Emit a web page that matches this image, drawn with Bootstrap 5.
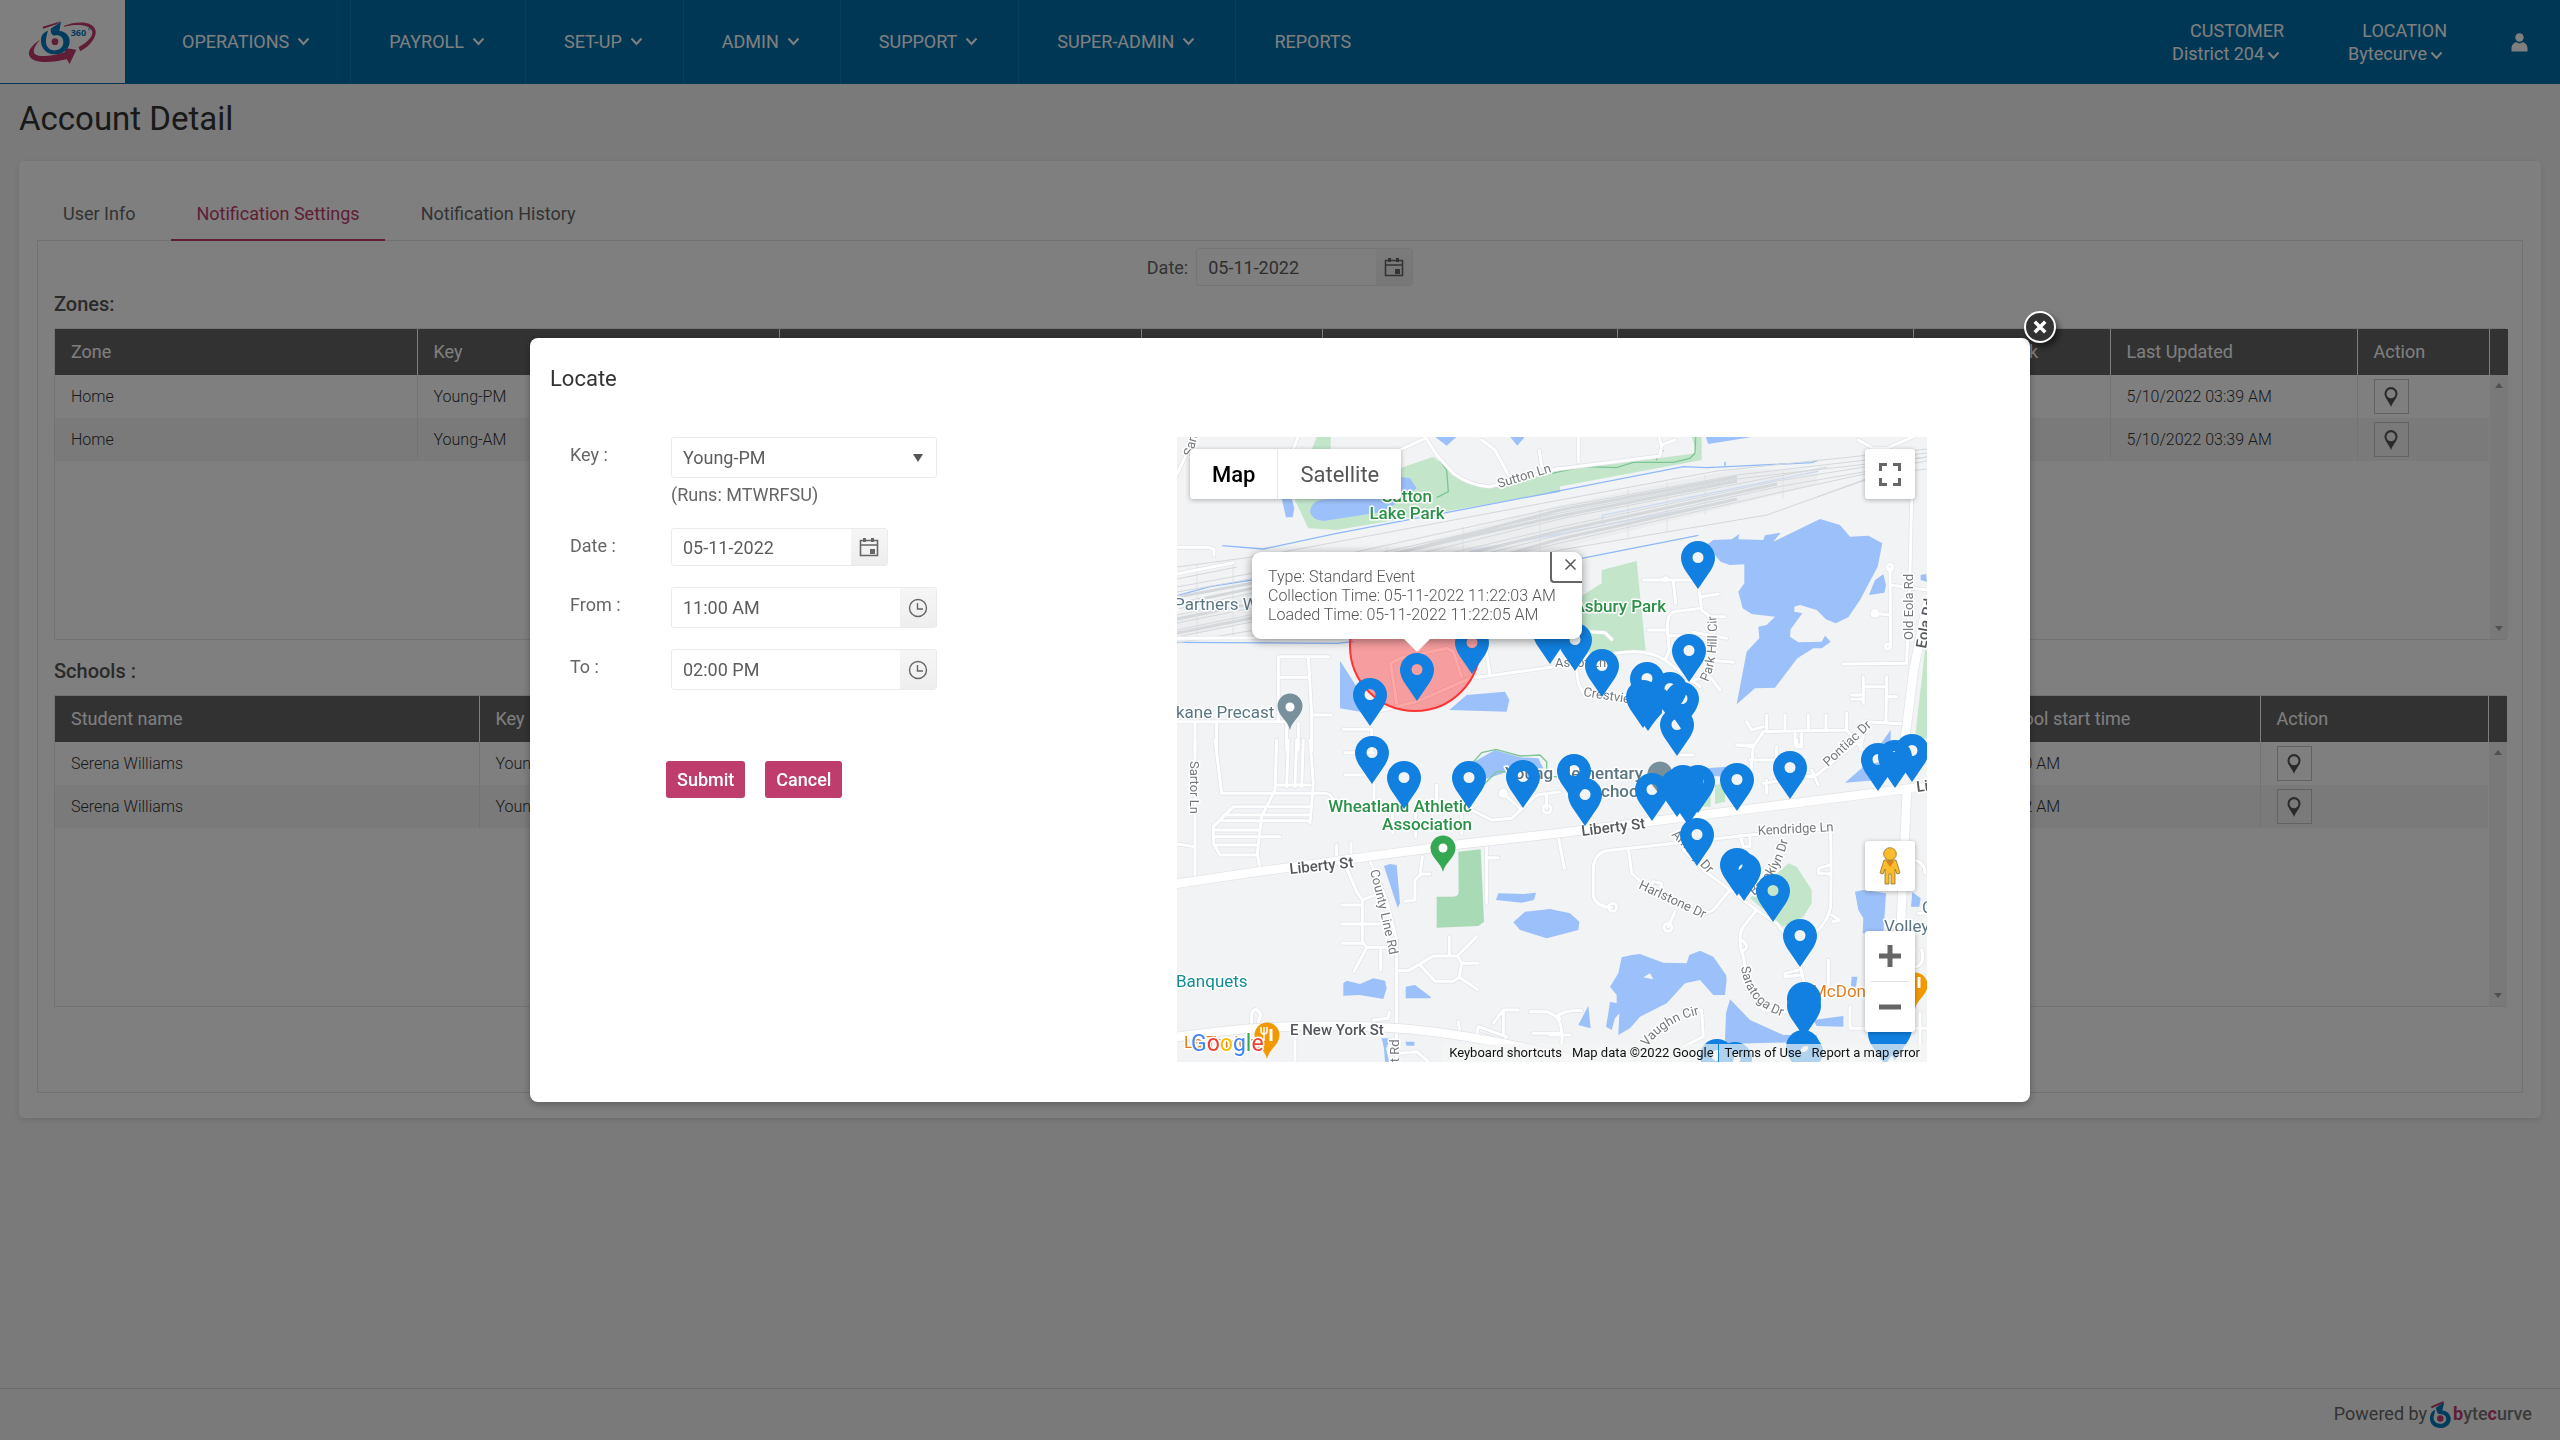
<!DOCTYPE html>
<html lang="en">
<head>
<meta charset="utf-8">
<meta name="viewport" content="width=device-width, initial-scale=1">
<title>Account Detail</title>
<link href="https://cdn.jsdelivr.net/npm/bootstrap@5.3.0/dist/css/bootstrap.min.css" rel="stylesheet">
<style>
  :root { --brand: #006eaa; --accent: #be3d6c; --line: #ebebeb; }
  body { font-family: Roboto, "Liberation Sans", sans-serif; font-size: 18px; line-height: 27px; color: #666; background: #f4f4f4; }
  a { color: inherit; text-decoration: none; }

  .topbar { background: var(--brand); color: #fff; height: 84px; }
  .brandbox { width: 125px; background: #fff; border-bottom: 1px solid var(--brand); }
  .mainnav .nav-link { color: #fff; padding: 0 40px 2px 38px; height: 84px; gap: 8px; border-right: 1px solid #1b7db3; }
  .mainnav .nav-item:first-child .nav-link { padding-left: 57px; }
  .mainnav .nav-item:last-child .nav-link { border-right: 0; }
  .picker { line-height: 23px; text-align: right; }
  .picker .chev { margin-left: 3px; }
  .chev { width: 13px; height: 9px; fill: none; stroke: currentColor; stroke-width: 2; }

  .pagetitle { font-size: 33px; line-height: 40px; font-weight: 400; color: #333; margin: 15px 19px 22px; }
  .panel { margin: 0 19px; padding: 28px 18px 25px; background: #fff; border-radius: 5px; box-shadow: 0 2px 6px rgba(0,0,0,.1); }
  .tabset { gap: 11px; padding-left: 1px; }
  .tabset .nav-link { color: #666; padding: 11px 25px 12px; height: 52px; border-bottom: 2px solid transparent; margin-bottom: -1px; }
  .tabset .nav-link.active { color: var(--accent); border-color: var(--accent); }
  .tabbody { border: 1px solid #e4e4e4; padding: 7px 16px 85px; }
  .secthead { font-size: 20px; line-height: 30px; font-weight: 500; color: #555; padding-top: 3px; margin: 0 0 9px; }

  .field { border: 1px solid var(--line); border-radius: 3px; height: 41px; background: #fff; overflow: hidden; }
  .field input, .field select { border: 0; outline: 0; background: transparent; color: #5c5c5c; padding: 0 11px; min-width: 0; width: 100%; appearance: none; font-size: 18px; }
  .field button { border: 0; width: 36px; flex: none; background: linear-gradient(#f6f6f6, #eee); color: #666; padding: 0; }
  .field button svg, .sq svg, .pinbtn svg { display: block; margin: auto; }
  .field-date { width: 217px; height: 38px; }
  .field-wide { width: 266px; }
  .caret { right: 13px; }
  .ico { fill: none; stroke: currentColor; }

  .gridbox { border: 1px solid #e6e6e6; min-height: 312px; }
  .grid { table-layout: fixed; width: 100%; align-self: flex-start; }
  .grid th { background: #656565; color: #fff; font-weight: 400; height: 46px; padding: 0 16px 2px; border-right: 1px solid #fff; white-space: nowrap; }
  .grid td { font-size: 16px; line-height: 24px; font-weight: 300; color: #333; height: 43px; padding: 0 16px; border-right: 1px solid #e6e6e6; white-space: nowrap; }
  .grid td:last-child { border-right: 0; }
  .grid tbody tr:nth-child(even) { background: #f5f5f5; }
  .pinbtn { width: 35px; height: 35px; border: 1px solid #c4c4c4; background: transparent; color: #555; padding: 0; }
  .rail { width: 18px; flex: none; background: #f3f3f3; }
  .rail-head { height: 46px; background: #656565; }
  .rail svg { fill: #a0a0a0; }
  .pagefoot { border-top: 1px solid #dcdcdc; height: 52px; padding: 0 28px 2px 0; }
  .footmark { margin: 0 2px; }
  .wordmark { font-weight: 500; color: #777; }
  .wordmark b { font-weight: 700; color: var(--accent); }

  .locate .modal-dialog { max-width: 1500px; }
  .locate .modal-content { border: 0; border-radius: 8px; box-shadow: 0 2px 8px rgba(0,0,0,.3); color: #666; }
  .locate .modal-header { border: 0; padding: 28px 20px 45px; }
  .locate .modal-title { font-size: 22px; line-height: 26px; font-weight: 400; color: #333; }
  .locate .modal-body { padding: 0 103px 40px 40px; }
  .closer { top: -27px; right: -26px; width: 32px; height: 32px; border-radius: 50%; border: 2px solid #fff; background: #333; color: #fff; padding: 0; box-shadow: 3px 4px 6px rgba(0,0,0,.5); }
  .formrow { margin-bottom: 21px; }
  .formrow > label { width: 101px; padding-top: 4px; }
  .runs { line-height: 25px; }
  .formacts { margin: 71px 0 0 96px; gap: 20px; }
  .btn-accent { --bs-btn-bg: var(--accent); --bs-btn-color: #fff; --bs-btn-hover-bg: #a83460; --bs-btn-hover-color: #fff; border: 0; border-radius: 3px; font-size: 18px; font-weight: 500; line-height: 27px; padding: 5px 11px; }

  .mapbox { flex: 0 0 750px; max-width: 750px; overflow: hidden; background: #f1f3f4; }
  .mapsvg { display: block; width: 100%; height: auto; font-family: Roboto, sans-serif; }
  .mapctl { background: #fff; border: 0; border-radius: 3px; box-shadow: 0 1px 5px rgba(0,0,0,.3); color: #666; }
  .sq { width: 50px; height: 50px; padding: 0; }
  .maptype { top: 12px; left: 13px; height: 50px; font-size: 22px; }
  .maptype button { border: 0; background: none; padding: 0 22px; color: #565656; }
  .maptype button:first-child { color: #000; font-weight: 500; border-right: 1px solid #e6e6e6; }
  .ctl-full { top: 12px; right: 12px; }
  .ctl-peg { bottom: 171px; right: 12px; }
  .ctl-zoom { bottom: 30px; right: 12px; }
  .ctl-zoom button { border: 0; background: none; color: #666; }
  .ctl-zoom hr { margin: 0 6px; opacity: 1; border-color: #e0e0e0; }
  .infowin { left: 75px; top: 115px; width: 330px; height: 87px; background: #fff; border-radius: 9px; padding: 15px 16px; font-size: 16px; line-height: 19px; font-weight: 300; color: #555; box-shadow: 0 2px 8px 1px rgba(0,0,0,.35); white-space: nowrap; }
  .infowin::after { content: ""; position: absolute; left: 151px; top: 86px; border: 14px solid transparent; border-bottom: 0; border-top-color: #fff; }
  .infoclose { top: 0; right: 0; width: 32px; height: 31px; border: 2px solid #666; border-top: 0; border-right: 0; border-bottom-left-radius: 4px; border-top-right-radius: 9px; background: #fff; padding: 0 0 5px 6px; color: #666; }
  .credits { right: 0; bottom: 0; height: 18px; padding: 0 7px; gap: 10px; font-size: 13px; line-height: 18px; color: #111; background: rgba(245,245,245,.7); }
  .credits .terms { border-left: 1px solid #1180e0; padding-left: 6px; margin-left: -6px; }

  .casing { stroke: #e0e2e6; fill: none; stroke-linejoin: round; stroke-linecap: round; }
  .surface { stroke: #fff; fill: none; stroke-linejoin: round; stroke-linecap: round; }
  .w13 { stroke-width: 13px; } .w9 { stroke-width: 9px; }
  .w30 { stroke-width: 30px; } .w26 { stroke-width: 26px; }
  .water { fill: #9cc0f9; } .park { fill: #c3e6cb; }
  .stream { fill: none; stroke: #8fb8fb; stroke-width: 4px; }
  .trail { fill: none; stroke: #7cc594; stroke-width: 4px; }
  .tracks { fill: none; stroke: #d5d8db; stroke-width: 1px; }
  .lbl text { paint-order: stroke; stroke: #fff; stroke-width: 3px; stroke-linejoin: round; }
  .poi { font-size: 17px; fill: #5b7683; }
  .street { font-size: 13px; fill: #75787c; }
  .major { font-size: 15px; font-weight: 500; fill: #54585c; }
  .green { fill: #2b9148; font-weight: 500; } .teal { fill: #128c96; } .orange { fill: #e37d1e; }
</style>
</head>
<body>
<svg width="0" height="0" class="position-absolute" aria-hidden="true">
  <defs>
    <symbol id="chev" viewBox="0 0 13 9"><path d="M1.5 1.5 6.5 7l5-5.5"/></symbol>
    <symbol id="cal" viewBox="0 0 20 20"><path d="M1.5 3.500h17v15h-17zM1.500 8h17" stroke-width="1.600"/><path d="M5.500 1v4M13.500 1v4" stroke-width="3"/><path d="M11 12h5v5h-5z" fill="currentColor" stroke="none"/></symbol>
    <symbol id="clock" viewBox="0 0 20 20"><circle cx="10" cy="10" r="8.500" stroke-width="1.400"/><path d="M9.500 5v6h5.500" stroke-width="1.400"/></symbol>
    <symbol id="place" viewBox="0 0 16 22"><path fill="currentColor" fill-rule="evenodd" d="M8 21C6.500 16 1.500 12 1.500 7.500a6.500 6.500 0 0 1 13 0C14.500 12 9.500 16 8 21zM8 3.200a4.500 4.500 0 1 0 0 9 4.500 4.500 0 0 0 0-9z"/></symbol>
    <symbol id="bmark" viewBox="0 0 66 86"><path fill="#c23b6b" d="M4 20 46 2 38 12 8 25z"/><path fill="#0079bd" d="M20 24 46 6 40 32C54 32 66 44 66 58 66 74 52 86 34 86 16 86 2 74 2 56 2 44 8 34 18 30L16 42C14 50 12 52 14 60 17 69 24 73 34 73 44 73 52 67 52 58 52 49 44 44 36 44 26 44 24 40 20 24z"/><circle cx="34" cy="57" r="10" fill="#c23b6b"/></symbol>
  </defs>
</svg>

<div class="d-flex flex-column min-vh-100">
  <header class="topbar d-flex">
    <a class="brandbox d-flex align-items-center" href="#" aria-label="b360 home">
      <svg width="125" height="83" viewBox="0 0 375 249">
        <path fill="#c23b6b" d="M128 80 183 64 170 73 130 86zM192 77C230 62 280 62 287 92 290 112 270 138 240 154L236 141C262 128 278 110 277 96 274 74 232 70 192 80z"/>
        <path fill="#c23b6b" d="M122 118C98 134 82 152 88 167 96 190 152 190 200 178L209 192 229 149 190 143 196 156C150 172 108 172 102 158 99 147 110 130 122 118z"/>
        <path fill="#0079bd" d="M152 86 183 65 178 93C197 94 209 108 209 124 209 146 192 163 166 163 140 163 123 146 123 122 123 108 128 98 144 92 138 112 136 124 140 136 145 148 156 152 166 151 181 150 190 140 190 126 190 112 180 105 168 106 158 107 152 104 152 86z"/>
        <circle cx="165" cy="125" r="10" fill="#c23b6b"/>
        <text x="212" y="107" font-family="Open Sans, sans-serif" font-weight="700" font-size="27" fill="#0079bd">360</text><circle cx="268" cy="87" r="3" fill="none" stroke="#0079bd" stroke-width="1.500"/>
      </svg>
    </a>
    <ul class="mainnav nav flex-nowrap">
      <li class="nav-item"><a class="nav-link d-flex align-items-center" href="#">OPERATIONS <svg class="chev"><use href="#chev"/></svg></a></li>
      <li class="nav-item"><a class="nav-link d-flex align-items-center" href="#">PAYROLL <svg class="chev"><use href="#chev"/></svg></a></li>
      <li class="nav-item"><a class="nav-link d-flex align-items-center" href="#">SET-UP <svg class="chev"><use href="#chev"/></svg></a></li>
      <li class="nav-item"><a class="nav-link d-flex align-items-center" href="#">ADMIN <svg class="chev"><use href="#chev"/></svg></a></li>
      <li class="nav-item"><a class="nav-link d-flex align-items-center" href="#">SUPPORT <svg class="chev"><use href="#chev"/></svg></a></li>
      <li class="nav-item"><a class="nav-link d-flex align-items-center" href="#">SUPER-ADMIN <svg class="chev"><use href="#chev"/></svg></a></li>
      <li class="nav-item"><a class="nav-link d-flex align-items-center" href="#">REPORTS</a></li>
    </ul>
    <div class="d-flex align-items-center ms-auto pe-4 me-2">
      <a class="picker me-5 pe-3" href="#">CUSTOMER<br><span class="pe-1">District 204<svg class="chev"><use href="#chev"/></svg></span></a>
      <a class="picker me-5 pe-3" href="#">LOCATION<br><span class="pe-1">Bytecurve<svg class="chev"><use href="#chev"/></svg></span></a>
      <a href="#" aria-label="Profile"><svg class="d-block" width="17" height="19" viewBox="0 0 17 19" fill="#fff"><circle cx="8.500" cy="4.500" r="4.200"/><path d="M.5 18.500v-3C.5 11 4 9.300 5.500 9.300c2 1.500 4 1.500 6 0 1.500 0 5 1.700 5 6.200v3z"/></svg></a>
    </div>
  </header>

  <main class="flex-grow-1">
    <h1 class="pagetitle">Account Detail</h1>
    <section class="panel">
      <ul class="tabset nav">
        <li class="nav-item"><a class="nav-link" href="#">User Info</a></li>
        <li class="nav-item"><a class="nav-link active" aria-current="page" href="#">Notification Settings</a></li>
        <li class="nav-item"><a class="nav-link" href="#">Notification History</a></li>
      </ul>
      <div class="tabbody">
        <div class="d-flex justify-content-center align-items-center gap-2">
          <label for="pageDate">Date:</label>
          <div class="field field-date d-flex"><input id="pageDate" type="text" value="05-11-2022"><button type="button" aria-label="Pick date"><svg class="ico" width="20" height="20"><use href="#cal"/></svg></button></div>
        </div>
        <h2 class="secthead">Zones:</h2>
        <div class="gridbox d-flex mb-2">
          <table class="grid">
            <colgroup><col width="362"><col width="362"><col width="362"><col width="181"><col width="295"><col width="296"><col width="197"><col width="247"><col width="132"></colgroup>
            <thead><tr><th>Zone</th><th>Key</th><th></th><th></th><th></th><th></th><th>Days of Week</th><th>Last Updated</th><th>Action</th></tr></thead>
            <tbody>
              <tr><td>Home</td><td>Young-PM</td><td></td><td></td><td></td><td></td><td></td><td>5/10/2022 03:39 AM</td><td><button class="pinbtn d-block" aria-label="Locate"><svg width="16" height="22"><use href="#place"/></svg></button></td></tr>
              <tr><td>Home</td><td>Young-AM</td><td></td><td></td><td></td><td></td><td></td><td>5/10/2022 03:39 AM</td><td><button class="pinbtn d-block" aria-label="Locate"><svg width="16" height="22"><use href="#place"/></svg></button></td></tr>
            </tbody>
          </table>
          <div class="rail d-flex flex-column align-items-center"><div class="rail-head w-100"></div><svg class="mt-2" width="8" height="5"><path d="M0 5 4 0l4 5z"/></svg><svg class="mt-auto mb-2" width="8" height="5"><path d="M0 0h8L4 5z"/></svg></div>
        </div>
        <h2 class="secthead pt-2 mt-1">Schools :</h2>
        <div class="gridbox d-flex">
          <table class="grid">
            <colgroup><col width="424"><col width="424"><col width="537"><col width="537"><col width="283"><col width="228"></colgroup>
            <thead><tr><th>Student name</th><th>Key</th><th></th><th></th><th>School start time</th><th>Action</th></tr></thead>
            <tbody>
              <tr><td>Serena Williams</td><td>Young-PM</td><td></td><td></td><td>08:00 AM</td><td><button class="pinbtn d-block" aria-label="Locate"><svg width="16" height="22"><use href="#place"/></svg></button></td></tr>
              <tr><td>Serena Williams</td><td>Young-AM</td><td></td><td></td><td>08:12 AM</td><td><button class="pinbtn d-block" aria-label="Locate"><svg width="16" height="22"><use href="#place"/></svg></button></td></tr>
            </tbody>
          </table>
          <div class="rail d-flex flex-column align-items-center"><div class="rail-head w-100"></div><svg class="mt-2" width="8" height="5"><path d="M0 5 4 0l4 5z"/></svg><svg class="mt-auto mb-2" width="8" height="5"><path d="M0 0h8L4 5z"/></svg></div>
        </div>
      </div>
    </section>
  </main>

  <footer class="pagefoot d-flex justify-content-end align-items-center">
    <span>Powered by</span>
    <svg class="footmark" width="22" height="28"><use href="#bmark"/></svg>
    <span class="wordmark"><b>b</b>yte<b>c</b>urve</span>
  </footer>
</div>

<div class="modal-backdrop show"></div>
<div class="modal locate d-block" role="dialog" aria-labelledby="locateTitle">
  <div class="modal-dialog modal-dialog-centered">
    <div class="modal-content">
      <button class="closer position-absolute d-flex align-items-center justify-content-center" type="button" aria-label="Close"><svg width="14" height="14" viewBox="0 0 12 12" stroke="#fff" stroke-width="3"><path d="M1.500 1.500l9 9M10.500 1.500l-9 9"/></svg></button>
      <div class="modal-header"><h2 class="modal-title" id="locateTitle">Locate</h2></div>
      <div class="modal-body d-flex justify-content-between">
        <form>
          <div class="formrow d-flex">
            <label for="fKey">Key :</label>
            <div>
              <div class="field field-wide d-flex align-items-center position-relative">
                <select id="fKey" class="h-100"><option>Young-PM</option><option>Young-AM</option></select>
                <svg class="caret position-absolute pe-none" width="10" height="8" fill="#555"><path d="M0 0h10L5 8z"/></svg>
              </div>
              <div class="runs pt-1">(Runs: MTWRFSU)</div>
            </div>
          </div>
          <div class="formrow d-flex">
            <label for="fDate">Date :</label>
            <div class="field field-date d-flex"><input id="fDate" type="text" value="05-11-2022"><button type="button" aria-label="Pick date"><svg class="ico" width="20" height="20"><use href="#cal"/></svg></button></div>
          </div>
          <div class="formrow d-flex">
            <label for="fFrom">From :</label>
            <div class="field field-wide d-flex"><input id="fFrom" type="text" value="11:00 AM"><button type="button" aria-label="Pick time"><svg class="ico" width="20" height="20"><use href="#clock"/></svg></button></div>
          </div>
          <div class="formrow d-flex mb-0">
            <label for="fTo">To :</label>
            <div class="field field-wide d-flex"><input id="fTo" type="text" value="02:00 PM"><button type="button" aria-label="Pick time"><svg class="ico" width="20" height="20"><use href="#clock"/></svg></button></div>
          </div>
          <div class="formacts d-flex"><button type="submit" class="btn btn-accent">Submit</button><button type="button" class="btn btn-accent">Cancel</button></div>
        </form>

        <div class="mapbox position-relative">
          <svg class="mapsvg" viewBox="0 0 750 625" role="img" aria-label="Map of stops">
            <defs>
              <path id="pin" fill="#1180e0" fill-rule="evenodd" d="M0 0-13-19Q-17-26-17-31A17 17 0 0 1 17-31Q17-26 13-19ZM0-37a5.500 5.500 0 1 0 0 11 5.500 5.500 0 0 0 0-11z"/>
              <g id="poipin"><path d="M0 0C-2-10-12.500-14-12.500-24a12.500 12.500 0 0 1 25 0C12.500-14 2-10 0 0z"/></g>
              <!-- map tiles: nw, ne, sw, se, each at three units to the pixel -->
              <g id="nwRoads"><path d="M20 352H115L132 357V376M20 432 190 398M0 175 75 20M370 57 385 20M690 60 765 25M765 20 800 75 850 130Q900 167 960 170L1170 115M935 30 975 60 1015 135M1108 62 1115 110M325 870V680H475M325 742H415M415 680 425 855H485M20 875H350M75 875V960M140 880V960M350 880V960M385 880V960M425 860V960M680 820 662 700 690 685 830 655 850 665 875 740M600 850 740 815 900 745 1170 708M945 640 960 735M520 898H605V960M0 625 550 622"/></g>
              <g id="neRoads"><path d="M85 20V95M0 120 330 78 335 45 375 30M335 50 328 25M925 30 970 55H1010L1090 20M1085 205 1080 430 1070 700 880 702M1020 415 1022 650M970 550 1020 555M1020 465 1131 480M280 450H440M445 460 455 540 480 560H525M370 455 377 520M455 500 505 492M455 535 370 545Q350 555 352 600L358 660 345 690M295 600H355M355 617H410M430 607 530 625M480 690 550 697M120 605 165 608 185 628M60 700 200 670Q290 655 345 690L450 770M400 755 480 740 510 780M77 700 85 760 100 790 200 810M940 740V820M1010 740 1008 875M905 795H940M905 808H940M940 770H1010M1008 800H1040M1060 882 950 875 930 960M650 855V900M705 855V895M775 855V895M828 855V895M890 850V900M560 945 610 950 640 905 890 900 940 960M590 875 605 900 640 890M735 905V945H755V905"/><circle cx="1020" cy="412" r="9"/><circle cx="975" cy="550" r="9"/><circle cx="1013" cy="650" r="7"/><circle cx="347" cy="448" r="5"/></g>
              <g id="swRoads"><path d="M75 0V415M135 0 155 160H470Q490 165 495 200M320 0 315 150 275 230 262 340 270 390M190 200H420M160 225H420M145 242H420M130 270H265M130 290H330M135 315H260M190 200 130 260V310L150 345H262M420 0 430 130 420 250M355 0 350 140M380 0 375 140M400 0 395 140M315 135H420M20 312 75 320M525 38H610M525 105H610M612 60V190M500 315V370M543 310V350M800 135V220M668 200V280M737 210V290M875 215V280M530 385 560 455 577 480V605L590 622H680M515 495H577M515 552H637M517 610H577M577 480 640 455M590 622 552 695M632 630V690M685 692H715L790 648H862L875 670 868 712 850 724H795L750 675M838 590V645M920 590 862 648M925 670H878M868 712 922 748M757 350 750 405 735 420V480L705 484M750 402H780M950 320V490M950 353H985M905 210 965 240 1025 235 1100 165 1170 155M1000 160 1050 205M1130 165V205M245 860V820Q258 795 272 825L265 845M375 885V965M610 840 655 835 658 815M690 940 740 935 775 965M865 845 870 880M925 860 1010 890 1000 905 920 880zM970 850 1000 810H1045M1000 810V880M1080 815H1130L1170 835M1090 880H1170"/><circle cx="1000" cy="160" r="9"/><circle cx="1131" cy="207" r="12"/><path d="M600 365 650 480 680 600V965"/></g>
              <g id="seRoads"><path d="M25 290 43 385M185 502Q140 500 130 470V380Q135 340 170 332L600 285 840 265Q845 300 842 500 835 540 800 575M235 325 245 400 290 440M300 440 310 425 335 430 330 455M460 525 490 510 540 450M375 515 355 560M400 330 460 390 540 450 620 510 680 550 740 630 765 740M620 510 580 560Q560 590 580 650L600 760 640 810 710 815M575 600Q605 622 575 635M570 285 580 320H600V285M745 690 705 700V710L755 705M835 660V740M845 525 870 540 848 545M840 375 805 385V400L840 402M1105 520H1131M1090 360Q1125 365 1125 400M1115 630Q1125 670 1100 680M900 800V865H1131M1000 865V960M1060 865V960M1110 820V960M380 45H430M565 15H610L600 130M600 60H680V20M650 120V160M640 130 800 105M740 0V20H755V0M930 0 800 105M785 90 805 135M20 830Q40 810 95 812M20 830Q40 860 35 910M0 885H60M400 810H455L460 890 400 920"/><circle cx="188" cy="502" r="12"/><circle cx="354" cy="562" r="12"/></g>
              <path id="cParkHill" d="M531 245Q544 218 538 165"/>
              <path id="cCounty" d="M193 434Q204 475 217 540"/>
              <path id="cBrook" d="M577 459Q606 435 613 395"/>
              <path id="cSara" d="M564 530Q570 573 615 582"/>
              <path id="cVaughn" d="M470 610Q490 582 530 576"/>
            </defs>
            <rect width="750" height="625" fill="#f1f3f4"/>

            <g transform="translate(-7 -7) scale(.33333)">
              <path class="park" d="M690 115 790 80 850 130 940 175 1170 125V185L820 245 500 300 415 295 370 200 690 190zM440 20H482V60H425z"/>
              <path class="water" d="M420 245Q425 205 480 208L640 200 690 140 720 145 740 175 700 205 640 245 460 273Q425 270 420 245zM335 205H365L373 235 368 262H348zM795 20H860L830 47zM1020 20H1065L1042 47zM510 692 560 770 570 845 510 835zM838 840 890 795 1005 785 1018 810 1010 845z"/>
              <path class="trail" d="M790 65 830 120 835 185 800 203"/>
              <path class="stream" d="M157 347 280 357 500 310 1170 183M20 497 120 470 245 450M20 637 500 640 550 635M900 362 1170 312"/>
            </g>
            <g transform="translate(373 -7) scale(.33333)">
              <path class="park" d="M0 125 440 70 425 20H455V90L0 175zM155 420 260 393 287 662 120 672 60 520 155 460zM1125 660H1131V925H1095zM1055 890 1070 870V930H1055z"/>
              <path class="water" d="M470 345 490 330 545 328 568 312 565 328 640 330 645 316 692 308 670 335 810 267 870 285 900 320 955 317 997 340 983 410 930 510 895 562 857 580 828 568 800 540 750 525 733 530V545L757 550 722 598 720 620 745 637 815 635 825 617 842 635 815 655 790 655 742 685 675 773 615 775 560 823 590 665 628 625 625 590 650 585 675 560 605 552 578 535 565 485 583 460V403L540 405 512 395zM467 20H612L475 42zM957 495 975 450 1000 433 1008 465 1003 488zM1112 435 1128 432 1131 455 1112 450zM990 945 1022 900V945z"/>
              <path class="stream" d="M0 188 400 110 470 113 785 98 803 91M525 108V95M160 285 157 256 803 124M0 317 493 222M95 385 445 316"/>
              <path class="trail" d="M5 130 100 110 200 113 250 97 370 97 420 85 435 70 437 20M318 90 340 60"/>
            </g>
            <!-- rail yard -->
            <path d="M0 180 120 140 383 68 560 32 640 33 640 48 383 111 180 165 0 200z" fill="#e8eaec" opacity=".7"/>
            <g class="tracks">
              <path d="M0 130 90 118 383 63 540 34 750 12M0 150 120 128 383 70 560 38 750 16M0 155 130 132 383 76 560 42 750 20M0 172 140 142 383 82 560 47 650 30M0 178 140 148 383 90 600 44 750 20M0 186 160 154 383 98 600 50 750 24M0 193 180 156 383 106 600 56 720 30M0 200 180 164 383 113 590 78 640 60 720 32M0 206 120 186 180 172M0 142 60 130M640 60 700 38 750 32"/>
              <path d="M0 160 130 136 383 79 560 44M0 182 150 151 383 94 600 47M0 196 180 160 383 102 560 62M0 167 135 139 383 73 560 40" stroke-width="3"/>
              <path d="M20 128V205M56 124V200M92 120V195M130 128V182M210 110V160M286 90V140M363 72V120M451 52V100M490 45V95M528 38V78M606 34V62" opacity=".6"/>
            </g>
            <g transform="translate(-7 303) scale(.33333)">
              <path class="park" d="M865 335 932 328 942 545 925 558 800 563V470H850Q866 468 866 455z" style="fill:#a8dab5"/>
              <path class="water" d="M905 70 975 30 1050 52 1105 55 1120 85 1020 92 940 120zM642 378 660 372 680 375 690 490 683 503zM978 480 985 460 1060 462 1098 458 1092 480 1055 488zM1030 547 1065 515 1140 507 1200 520 1228 545 1225 570 1130 595 1050 570zM520 730 530 722 570 732 610 715 645 722 650 745 640 777 570 765 520 767zM707 740 735 735 782 770V775H707zM635 895H655V910L648 925 657 965H645L642 925zM706 905H733V917H710zM1085 920H1110V935H1085z"/>
              <path class="trail" d="M905 72 935 38 978 28 1050 48 1110 45 1130 65V90M1170 110H1110M1020 95H980L940 135"/>
            </g>
            <g transform="translate(373 303) scale(.33333)">
              <path class="park" d="M600 475 660 420 715 370 740 380 785 450 785 490 760 530 700 560zM450 160H482V200H450zM495 135 525 130V185L495 192z"/>
              <path class="water" d="M180 740 205 700 215 652 245 645 270 642 340 668 410 670 418 645 450 632 490 650 528 705 530 720 525 765H490L450 720 405 730 350 790 270 830 240 865 205 885 208 820 195 835 185 870 168 860 175 820 180 785 200 790 200 765zM525 905 528 820 540 778 600 840 700 885 800 885 800 905 525 912zM885 128 940 80 1010 60V118zM0 508 50 525 60 560 0 585zM85 855 115 797 122 865zM470 85 530 80V110L490 108zM915 455 940 450 1008 460 1000 580H938L940 535 925 510zM1087 457 1112 475 1108 500 1083 500zM905 710H922L918 740H903zM790 840 880 828V860L800 858z"/>
              <path fill="#f1f3f4" d="M280 712 300 700 310 718z"/>
            </g>
            <!-- roads: casing first, then surface -->
            <g class="casing w13">
              <use href="#nwRoads" transform="translate(-7 -7) scale(.33333)"/><use href="#neRoads" transform="translate(373 -7) scale(.33333)"/><use href="#swRoads" transform="translate(-7 303) scale(.33333)"/><use href="#seRoads" transform="translate(373 303) scale(.33333)"/>
            </g>
            <g class="surface w9">
              <use href="#nwRoads" transform="translate(-7 -7) scale(.33333)"/><use href="#neRoads" transform="translate(373 -7) scale(.33333)"/><use href="#swRoads" transform="translate(-7 303) scale(.33333)"/><use href="#seRoads" transform="translate(373 303) scale(.33333)"/>
            </g>
            <g transform="scale(.33333)">
              <g class="casing w30"><path d="M0 1340 250 1303 580 1258 850 1222 1150 1188 2250 1048M0 1800Q300 1755 600 1770 850 1780 1200 1870M2190 1055 2170 1500M2172 1000 2210 700 2250 500"/></g>
              <g class="surface w26"><path d="M0 1340 250 1303 580 1258 850 1222 1150 1188 2250 1048M0 1800Q300 1755 600 1770 850 1780 1200 1870M2190 1055 2170 1500M2172 1000 2210 700 2250 500"/></g>
            </g>

            <g class="lbl">
              <text class="street" transform="translate(15 20) rotate(-75)">San</text>
              <g class="poi green" text-anchor="middle"><text x="230" y="65">Sutton</text><text x="230" y="82">Lake Park</text></g>
              <text class="street" transform="translate(322 51) rotate(-17)">Sutton Ln</text>
              <text class="poi" x="-3" y="173">Partners W</text>
              <text class="poi" x="-1" y="281">kane Precast</text>
              <text class="poi green" x="489" y="175" text-anchor="end">Asbury Park</text>
              <text class="street"><textPath href="#cParkHill">Park Hill Cir</textPath></text>
              <text class="street" transform="translate(736 203) rotate(-90)">Old Eola Rd</text>
              <text class="major" transform="translate(749 212) rotate(-80)">Eola Rd</text>
              <text class="street" x="378" y="230">Ascot Ln</text>
              <text class="street" transform="translate(406 259) rotate(9)">Crestview Dr</text>
              <text class="street" transform="translate(651 330) rotate(-43)">Pontiac Dr</text>
              <text class="street" transform="translate(13 324) rotate(90)">Sartor Ln</text>
              <text class="major" transform="translate(113 437) rotate(-6)">Liberty St</text>
              <text class="major" transform="translate(405 399) rotate(-7)">Liberty St</text>
              <text class="major" transform="translate(740 355) rotate(-7)">Li</text>
              <text class="street"><textPath href="#cCounty">County Line Rd</textPath></text>
              <text class="poi green" x="295" y="375" text-anchor="end">Wheatland Athletic</text>
              <text class="poi green" x="295" y="393" text-anchor="end">Association</text>
              <text class="poi" x="466" y="342" text-anchor="end" font-weight="500">Young Elementary</text>
              <text class="poi" x="466" y="360" text-anchor="end" font-weight="500">School</text>
              <text class="street" transform="translate(581 398) rotate(-3)">Kendridge Ln</text>
              <text class="street"><textPath href="#cBrook">Brooklyn Dr</textPath></text>
              <text class="street" transform="translate(494 398) rotate(46)">Amory Dr</text>
              <text class="street" transform="translate(461 451) rotate(25)">Harlstone Dr</text>
              <text class="street"><textPath href="#cSara">Saratoga Dr</textPath></text>
              <text class="street"><textPath href="#cVaughn">Vaughn Cir</textPath></text>
              <text class="poi" x="745" y="476">C</text>
              <text class="poi" x="707" y="495">Volley</text>
              <text class="poi orange" x="635" y="560">McDona</text>
              <text class="poi teal" x="-1" y="550">Banquets</text>
              <text class="major" x="113" y="598">E New York St</text>
              <text class="poi orange" x="7" y="611">La Tapiers</text>
              <text class="street" transform="translate(222 633) rotate(-90)">St Rd</text>
            </g>
            <g fill="#78909c"><use href="#poipin" x="113" y="293"/><use href="#poipin" x="483" y="361"/></g>
            <use href="#poipin" x="266" y="435" fill="#34a853"/>
            <g fill="#f29900"><use href="#poipin" x="90" y="622"/><use href="#poipin" x="738" y="572"/></g>
            <g fill="#fff"><circle cx="113" cy="270" r="4.500"/><circle cx="266" cy="411" r="4.500"/></g>
            <g fill="none" stroke="#fff"><path d="M84 590v4q0 3 3 3t3-3v-4M87 590v14" stroke-width="1.500"/><path d="M94 604v-12" stroke-width="3"/><path d="M742 540v11" stroke-width="3"/></g>
            <circle cx="238" cy="209" r="65" fill="#ff0000" fill-opacity=".35" stroke="#f33" stroke-width="2"/>
            <g>
              <use href="#pin" x="521" y="152"/><use href="#pin" x="240" y="264"/><use href="#pin" x="295" y="237"/><use href="#pin" x="373" y="227"/><use href="#pin" x="398" y="234"/><use href="#pin" x="425" y="260"/><use href="#pin" x="512" y="245"/><use href="#pin" x="193" y="289"/><use href="#pin" x="195" y="347"/>
              <use href="#pin" x="470" y="273"/><use href="#pin" x="493" y="283"/><use href="#pin" x="466" y="291"/><use href="#pin" x="471" y="294"/><use href="#pin" x="505" y="293"/><use href="#pin" x="500" y="319"/>
              <path fill="#1180e0" d="M455 253l20-5 8 10 2 18-14 16-12-14zM488 252l5 6 2 22-10-8z"/>
              <use href="#pin" x="227" y="372"/><use href="#pin" x="292" y="372"/><use href="#pin" x="346" y="371"/><use href="#pin" x="397" y="365"/><use href="#pin" x="408" y="389"/><use href="#pin" x="475" y="384"/>
              <use href="#pin" x="500" y="380"/><use href="#pin" x="506" y="376"/><use href="#pin" x="511" y="388"/><use href="#pin" x="521" y="376"/><path fill="#1180e0" d="M494 337h32v28l-14 16-20-22z"/>
              <use href="#pin" x="560" y="374"/><use href="#pin" x="613" y="362"/><use href="#pin" x="701" y="354"/><use href="#pin" x="718" y="351"/><use href="#pin" x="735" y="345"/><path fill="#1180e0" d="M704 315h22l-4 22-6 6-12-10z"/>
              <use href="#pin" x="520" y="429"/><use href="#pin" x="560" y="459"/><use href="#pin" x="567" y="464"/><use href="#pin" x="596" y="485"/><use href="#pin" x="623" y="530"/>
              <use href="#pin" x="627" y="593"/><use href="#pin" x="627" y="600"/><path fill="#1180e0" d="M617 552h20v26h-20z"/><use href="#pin" x="626" y="641"/><use href="#pin" x="629" y="646"/><use href="#pin" x="540" y="650"/><use href="#pin" x="558" y="653"/><use href="#pin" x="708" y="628"/><use href="#pin" x="718" y="623"/>
            </g>
            <g class="lbl" font-size="23"><text x="14" y="614"><tspan fill="#4285f4">G</tspan><tspan fill="#ea4335">o</tspan><tspan fill="#fbbc04">o</tspan><tspan fill="#4285f4">g</tspan><tspan fill="#34a853">l</tspan><tspan fill="#ea4335">e</tspan></text></g>
          </svg>

          <div class="mapctl maptype position-absolute d-flex"><button type="button">Map</button><button type="button">Satellite</button></div>
          <button class="mapctl sq ctl-full position-absolute" type="button" aria-label="Full screen"><svg width="22" height="23" viewBox="0 0 22 23" fill="none" stroke="#666" stroke-width="3"><path d="M1.500 8V1.500H8M14 1.500h6.500V8M20.500 15v6.500H14M8 21.500H1.500V15"/></svg></button>
          <button class="mapctl sq ctl-peg position-absolute" type="button" aria-label="Street View"><svg width="22" height="38" viewBox="0 0 22 38"><path d="M5 13h12l4 13-3 1-2-5v15h-4V27h-2v10H6V22l-2 5-3-1z" fill="#fbbc2b" stroke="#8f7430" stroke-width=".8"/><path d="M7 14h8l-4 6z" fill="#e07f20"/><circle cx="11" cy="7" r="6.300" fill="#fbbc2b" stroke="#8f7430" stroke-width=".8"/></svg></button>
          <div class="mapctl ctl-zoom position-absolute">
            <button class="sq d-block" type="button" aria-label="Zoom in"><svg width="22" height="22" stroke="#666" stroke-width="5"><path d="M0 11h22M11 0v22"/></svg></button>
            <hr>
            <button class="sq d-block" type="button" aria-label="Zoom out"><svg width="22" height="22" stroke="#666" stroke-width="5"><path d="M0 11h22"/></svg></button>
          </div>
          <div class="infowin position-absolute">
            Type: Standard Event<br>Collection Time: 05-11-2022 11:22:03 AM<br>Loaded Time: 05-11-2022 11:22:05 AM
            <button class="infoclose position-absolute d-flex align-items-center justify-content-center" type="button" aria-label="Close info"><svg width="11" height="11" stroke="#555" stroke-width="1.500"><path d="M.5.5l10 10M10.500.5l-10 10"/></svg></button>
          </div>
          <div class="credits position-absolute d-flex"><a href="#">Keyboard shortcuts</a><span>Map data ©2022 Google</span><a class="terms" href="#">Terms of Use</a><a href="#">Report a map error</a></div>
        </div>
      </div>
    </div>
  </div>
</div>
<script src="https://cdn.jsdelivr.net/npm/bootstrap@5.3.0/dist/js/bootstrap.bundle.min.js"></script>
</body>
</html>
